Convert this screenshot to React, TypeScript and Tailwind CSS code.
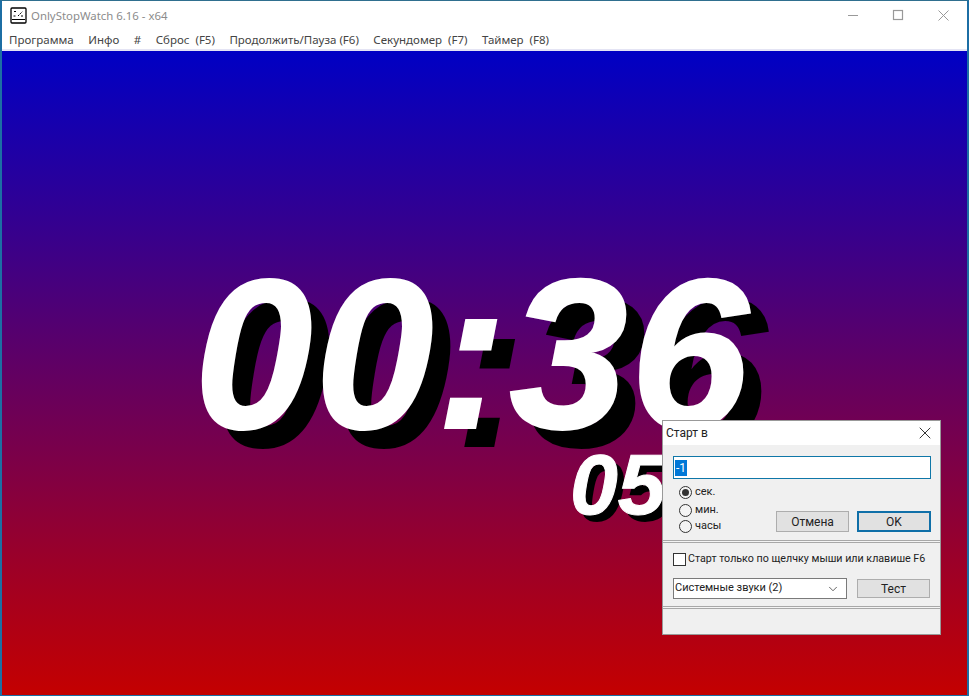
import { X, ChevronDown } from 'lucide-react'

const menu = ['Программа', 'Инфо', '#', 'Сброс  (F5)', 'Продолжить/Пауза (F6)', 'Секундомер  (F7)', 'Таймер  (F8)']

function Radio({ label, checked, className }: { label: string; checked?: boolean; className?: string }) {
  return (
    <div className={`flex items-center gap-[3px] h-[13px] ${className ?? ''}`}>
      <div className="w-[13px] h-[13px] shrink-0 rounded-full border border-[#333] bg-[#f4f4f4] flex items-center justify-center">
        {checked && <div className="w-[7px] h-[7px] rounded-full bg-[#333]" />}
      </div>
      <span>{label}</span>
    </div>
  )
}

function Separator() {
  return <div className="h-[3px] border-y border-[#a8a8a8] bg-[#f4f4f4]" />
}

export default function App() {
  return (
    <div className="relative w-[969px] h-[696px] overflow-hidden flex flex-col bg-white border-t border-[#2f6f8f] border-x-2 border-x-[#1c6ea4] border-b border-b-[#1c6ea4] font-['Noto_Sans',sans-serif] text-[11.5px] text-[#444]">
      {/* title bar */}
      <div className="h-[29px] shrink-0 flex items-center pl-[8px] bg-white">
        <svg width="17" height="17" viewBox="0 0 17 17" className="shrink-0">
          <rect x="1" y="1" width="15" height="15" rx="1" fill="#fff" stroke="#000" strokeWidth="1.3" />
          <path d="M2 12.5h13" stroke="#000" strokeWidth="1" />
          <path d="M8 9l4.5-4.5M4 4.5h2M3.5 9h2M11 9h2" stroke="#000" strokeWidth="1" strokeDasharray="2 1" fill="none" />
        </svg>
        <span className="ml-[4px] text-[11.4px] text-[#8c8c8c]">OnlyStopWatch 6.16 - x64</span>
        <div className="ml-auto flex items-center">
          <svg width="167" height="12" viewBox="0 0 167 12" className="mr-[18px] -mt-[1px]" fill="none" stroke="#999" strokeWidth="1">
            <path d="M66 6.5h10" />
            <rect x="111.5" y="1.5" width="9" height="9" strokeWidth="1.2" />
            <path d="M156.5 1.5l10 10M166.5 1.5l-10 10" />
          </svg>
        </div>
      </div>

      {/* menu */}
      <div className="h-[21px] shrink-0 flex items-center gap-[14.5px] pl-[7px] bg-white border-b-2 border-[#e4e4f4] whitespace-pre">
        {menu.map((m) => (
          <span key={m}>{m}</span>
        ))}
      </div>

      {/* clock */}
      <div className="flex-1 flex flex-col bg-[linear-gradient(to_bottom,#0000c4,#c40000)] font-['Liberation_Sans',sans-serif] font-bold italic text-white">
        <div className="mt-[218px] pl-[192px] text-[213px] tracking-[2.5px] leading-[170px] [-webkit-text-stroke:2px_white] [text-shadow:19px_19px_0_#000]">00:36</div>
        <div className="mt-[10px] pl-[568px] text-[86px] leading-[70px] [-webkit-text-stroke:1px_white] [text-shadow:7px_7px_0_#000]">05</div>
      </div>

      {/* dialog */}
      <div className="absolute left-[660px] top-[419px] w-[279px] h-[215px] flex flex-col bg-[#f0f0f0] border border-[#999] font-['Roboto',sans-serif] text-[11px] text-[#222] whitespace-nowrap">
        <div className="h-[24px] shrink-0 flex items-center justify-between pl-[3px] pr-[5px] bg-white text-[12px]">
          <span>Старт в</span>
          <X size={20} strokeWidth={1.1} className="text-[#222]" />
        </div>

        <div className="pl-[10px] pr-[9px] pt-[11px]">
          <div className="h-[23px] flex items-center pl-[1px] bg-white border border-[#0f77a8] text-[12px]">
            <span className="bg-[#0078d7] text-white px-[1px] leading-[16px]">-1</span>
          </div>
          <div className="flex justify-between mt-[6px] h-[47px]">
            <div className="flex flex-col pl-[6px] pt-[1px]">
              <Radio label="сек." checked />
              <Radio label="мин." className="mt-[5px]" />
              <Radio label="часы" className="mt-[3px]" />
            </div>
            <div className="flex items-end gap-[8px]">
              <button className="w-[73px] h-[21px] bg-[#e1e1e1] border border-[#adadad] text-[12px]">Отмена</button>
              <button className="w-[74px] h-[21px] bg-[#e1e1e1] border-2 border-[#0f6fa8] text-[12px]">OK</button>
            </div>
          </div>
        </div>

        <div className="mt-[8px]"><Separator /></div>

        <div className="pl-[10px] pr-[9px] pt-[10px]">
          <div className="flex items-center gap-[2px] h-[13px]">
            <div className="w-[13px] h-[13px] shrink-0 bg-white border border-[#333]" />
            <span className="text-[10.7px]">Старт только по щелчку мыши или клавише F6</span>
          </div>
          <div className="flex justify-between items-center mt-[12px]">
            <div className="w-[174px] h-[21px] flex items-center justify-between pl-[1px] pr-[6px] bg-white border border-[#7a7a7a]">
              <span>Системные звуки (2)</span>
              <ChevronDown size={14} strokeWidth={1.2} />
            </div>
            <button className="w-[73px] h-[19px] mr-[1px] bg-[#e1e1e1] border border-[#adadad] text-[12px]">Тест</button>
          </div>
        </div>

        <div className="mt-[7px]"><Separator /></div>
      </div>
    </div>
  )
}
